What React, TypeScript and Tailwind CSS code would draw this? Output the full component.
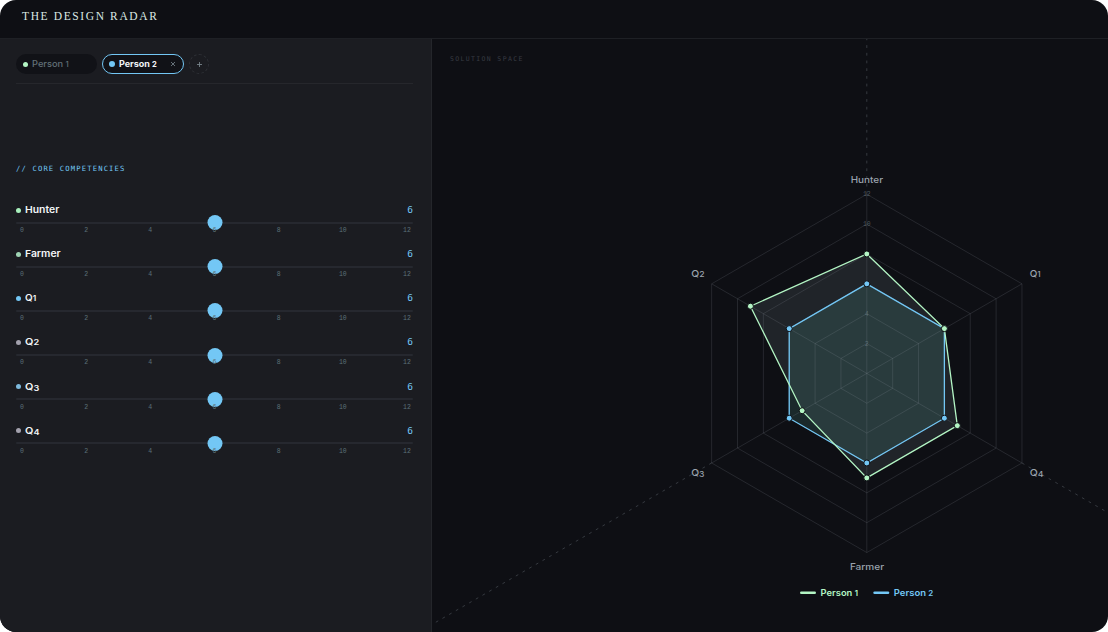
import React from 'react';

const GREEN = '#b3f5c4';
const BLUE = '#73c7f5';
const BG = '#0e0f14';

const competencies = [
  { name: 'Hunter', value: 6, dot: 'bg-[#a8f0bc]', scale: 'scale-x-[1.13]' },
  { name: 'Farmer', value: 6, dot: 'bg-[#9fd3b4]', scale: 'scale-x-[1.13]' },
  { name: 'Q1', value: 6, dot: 'bg-[#73c7f5]', scale: 'scale-x-[1.08]' },
  { name: 'Q2', value: 6, dot: 'bg-[#a3a1ad]', scale: 'scale-x-[1.18]' },
  { name: 'Q3', value: 6, dot: 'bg-[#7db9dd]', scale: 'scale-x-[1.18]' },
  { name: 'Q4', value: 6, dot: 'bg-[#a3a1ad]', scale: 'scale-x-[1.18]' }
];

const ticks = [0, 2, 4, 6, 8, 10, 12];

// clockwise from the top: Hunter, Q1, Q4, Farmer, Q3, Q2
const people = [
  { name: 'Person 1', color: GREEN, fill: '#b3d2dc', opacity: 0.11, values: [8, 6, 7, 7, 5, 9], x: 800, length: 37.5 },
  { name: 'Person 2', color: BLUE, fill: '#70dccc', opacity: 0.13, values: [6, 6, 6, 6, 6, 6], x: 873.3, length: 39.5 }
];

const axisLabels = [
  { name: 'Hunter', x: 850.7, y: 182.7, length: 32.3 },
  { name: 'Q1', x: 1029.7, y: 277, length: 11 },
  { name: 'Q4', x: 1029.7, y: 476.3, length: 13.7 },
  { name: 'Farmer', x: 849.9, y: 569.6, length: 34.2 },
  { name: 'Q3', x: 691.2, y: 476.3, length: 13.3 },
  { name: 'Q2', x: 691.2, y: 277, length: 13.3 }
];

const CX = 866.8;
const CY = 373.4;
const UNIT = 14.93;

function point(axis: number, value: number) {
  const angle = (axis * Math.PI) / 3;
  return [CX + Math.sin(angle) * value * UNIT, CY - Math.cos(angle) * value * UNIT];
}

function polygon(values: number[]) {
  return values.map((value, axis) => point(axis, value).join(',')).join(' ');
}

function splitDigit(name: string) {
  const digit = name.match(/\d$/)?.[0] ?? '';
  return { base: digit ? name.slice(0, -1) : name, digit };
}

// old-style figures: digits sit at x-height, 3 and 4 drop below the baseline
function Label({ name }: { name: string }) {
  const { base, digit } = splitDigit(name);
  return (
    <>
      {base}
      {digit && (
        <span className={`inline-block text-[0.84em] leading-none ${digit > '2' ? 'translate-y-[1px]' : ''}`}>
          {digit}
        </span>
      )}
    </>
  );
}

function SvgLabel({ name }: { name: string }) {
  const { base, digit } = splitDigit(name);
  return (
    <>
      {base}
      {digit && <tspan fontSize="7.5" dy={digit > '2' ? 1 : 0}>{digit}</tspan>}
    </>
  );
}

function Radar() {
  return (
    <svg viewBox="432 39 676 593" className="block h-full w-full">
      <g stroke="#3a3e45" strokeWidth="0.9" strokeDasharray="2.8 4.9">
        <line x1={CX} y1={CY - 12 * UNIT} x2={CX} y2="39" />
        <line x1={point(4, 12)[0]} y1={point(4, 12)[1]} x2={point(4, 34)[0]} y2={point(4, 34)[1]} />
        <line x1={point(2, 12)[0]} y1={point(2, 12)[1]} x2={point(2, 20)[0]} y2={point(2, 20)[1]} />
      </g>
      {people.map((person) => (
        <polygon key={person.name} points={polygon(person.values)} fill={person.fill} fillOpacity={person.opacity} />
      ))}
      <g stroke="#a0a8b4" strokeOpacity="0.16" strokeWidth="1" fill="none">
        {[2, 4, 6, 8, 10, 12].map((ring) => (
          <polygon key={ring} points={polygon([ring, ring, ring, ring, ring, ring])} />
        ))}
        {[0, 1, 2].map((axis) => (
          <line
            key={axis}
            x1={point(axis + 3, 12)[0]}
            y1={point(axis + 3, 12)[1]}
            x2={point(axis, 12)[0]}
            y2={point(axis, 12)[1]}
          />
        ))}
      </g>
      <g fill="#7f9099" fillOpacity="0.55" fontSize="6.5" textAnchor="middle" fontFamily="Liberation Mono, monospace">
        {[2, 4, 6, 8, 10, 12].map((ring) => (
          <text key={ring} x={CX} y={CY - ring * UNIT + 2}>{ring}</text>
        ))}
      </g>
      {[...people].reverse().map((person) => (
        <g key={person.name}>
          <polygon points={polygon(person.values)} fill="none" stroke={person.color} strokeWidth="1.3" />
          {person.values.map((value, axis) => (
            <circle
              key={axis}
              cx={point(axis, value)[0]}
              cy={point(axis, value)[1]}
              r="3"
              fill={person.color}
              stroke={BG}
              strokeWidth="1"
            />
          ))}
        </g>
      ))}
      <g fontFamily="Inter, sans-serif" fontSize="9" fontWeight="500">
        {axisLabels.map((label) => (
          <text
            key={label.name}
            x={label.x}
            y={label.y}
            fill="#9aa3ad"
            textLength={label.length}
            lengthAdjust="spacingAndGlyphs"
          >
            <SvgLabel name={label.name} />
          </text>
        ))}
        {people.map((person) => (
          <g key={person.name} fill={person.color}>
            <rect x={person.x} y="591.5" width="16" height="2.6" rx="1.3" />
            <text
              x={person.x + 20.5}
              y="596"
              fontWeight="600"
              textLength={person.length}
              lengthAdjust="spacingAndGlyphs"
            >
              <SvgLabel name={person.name} />
            </text>
          </g>
        ))}
      </g>
    </svg>
  );
}

function Competency({ item }: { item: (typeof competencies)[number] }) {
  return (
    <div className="h-[44.15px]">
      <div className="flex h-3 items-center">
        <span className={`-ml-[0.5px] h-[5px] w-[5px] rounded-full ${item.dot}`} />
        <span className={`ml-[4.5px] origin-left text-[9.2px] leading-3 font-semibold whitespace-nowrap text-[#f2f5f7] ${item.scale}`}>
          <Label name={item.name} />
        </span>
        <span className="ml-auto font-['DejaVu_Sans_Mono',monospace] text-[9.5px] leading-3 text-[#73c7f5]">
          {item.value}
        </span>
      </div>
      <div className="relative mt-[5.7px] h-[2px] rounded-full bg-[#26282f]">
        <span
          className="absolute -top-[6.6px] h-[15px] w-[15px] -translate-x-1/2 rounded-full bg-[#73c7f5]"
          style={{ left: `${(item.value / 12) * 100}%` }}
        />
      </div>
      <div className="relative mt-[3.3px] flex justify-between font-['Liberation_Mono',monospace] text-[6.5px] leading-[8px] text-[#5c7078]">
        {ticks.map((tick) => (
          <span key={tick} className="w-3 text-center">{tick}</span>
        ))}
      </div>
    </div>
  );
}

export default function App() {
  return (
    <div className="h-[632px] w-[1108px] bg-white">
      <div className="flex h-full flex-col overflow-hidden rounded-[16px] bg-[#0e0f14] font-['Inter',sans-serif]">
        <header className="h-[39px] border-b border-[#1e2025] pl-[22px]">
          <h1 className="pt-2 font-['Liberation_Serif',serif] text-[11.5px] leading-4 tracking-[1.62px] text-[#dce9e4]">
            THE DESIGN RADAR
          </h1>
        </header>
        <div className="flex min-h-0 flex-1">
          <aside className="w-[432px] border-r border-[#24262b] bg-[#1b1c21] pr-[18px] pl-4">
            <div className="flex h-[45px] items-start border-b border-[#26272c] pt-[15px]">
              <button className="flex h-5 w-[81px] items-center rounded-full bg-[#111217] pl-[7px]">
                <span className="h-[5px] w-[5px] rounded-full bg-[#b3f5c4]" />
                <span className="ml-1 origin-left scale-x-[1.03] text-[9px] leading-3 font-medium whitespace-nowrap text-[#627078]">
                  <Label name="Person 1" />
                </span>
              </button>
              <button className="ml-[5px] flex h-5 w-[82px] items-center rounded-full border border-[#73c7f5] bg-[#111217] pr-[7px] pl-[6px]">
                <span className="h-[6px] w-[6px] rounded-full bg-[#73c7f5]" />
                <span className="ml-1 origin-left text-[9px] leading-3 font-bold whitespace-nowrap text-[#f2f5f7]">
                  <Label name="Person 2" />
                </span>
                <svg viewBox="0 0 6 6" className="ml-auto h-[6px] w-[6px]" stroke="#6f7c83" strokeWidth="0.9">
                  <path d="M1 1l4 4M5 1L1 5" />
                </svg>
              </button>
              <button className="ml-[5px] flex h-5 w-5 items-center justify-center rounded-full border border-dashed border-[#2e3036]">
                <svg viewBox="0 0 6 6" className="h-[6px] w-[6px]" stroke="#77838a" strokeWidth="0.9">
                  <path d="M3.5 1v5M1 3.5h5" />
                </svg>
              </button>
            </div>
            <h2 className="mt-[78.5px] font-['DejaVu_Sans_Mono',monospace] text-[7.2px] leading-[12px] tracking-[1.15px] text-[#73c7f5]">
              // CORE COMPETENCIES
            </h2>
            <div className="mt-[29.5px]">
              {competencies.map((item) => (
                <Competency key={item.name} item={item} />
              ))}
            </div>
          </aside>
          <main className="relative min-w-0 flex-1">
            <span className="absolute top-[14px] left-[18px] font-['DejaVu_Sans_Mono',monospace] text-[6.5px] leading-3 tracking-[1.35px] text-[#383b43]">
              SOLUTION SPACE
            </span>
            <Radar />
          </main>
        </div>
      </div>
    </div>
  );
}
